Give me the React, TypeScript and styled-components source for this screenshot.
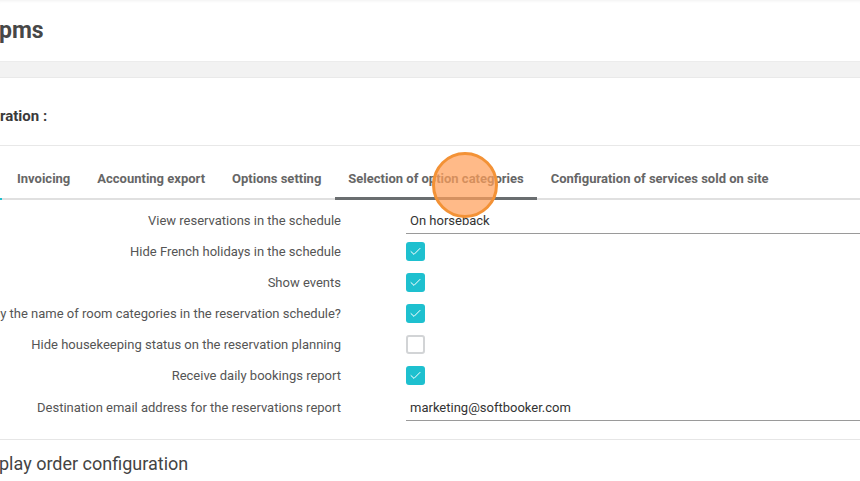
import React from "react";
import styled, { createGlobalStyle } from "styled-components";

const GlobalStyle = createGlobalStyle`
  html, body {
    margin: 0;
    padding: 0;
    background: #fff;
    overflow: hidden;
  }
  body {
    font-family: Roboto, "Liberation Sans", Arial, sans-serif;
    color: #555;
  }
`;

//components
const Page = styled.div`
  width: 860px;
  height: 481px;
  position: relative;
  overflow: hidden;
  background: #fff;
`;

const Header = styled.header`
  height: 61px;
  display: flex;
  align-items: center;
  box-shadow: inset 0 3px 3px -2px rgba(0, 0, 0, 0.06);
`;

const AppTitle = styled.h1`
  margin: 0 0 0 -1px;
  font-size: 23px;
  font-weight: 700;
  color: #474747;
`;

const Band = styled.div`
  height: 15px;
  background: #f2f2f2;
  border-top: 1px solid #ececec;
  border-bottom: 1px solid #e9e9e9;
`;

const Card = styled.section`
  background: #fff;
`;

const CardTitle = styled.h2`
  margin: 0;
  height: 59px;
  padding-top: 8px;
  display: flex;
  align-items: center;
  font-size: 15px;
  font-weight: 700;
  color: #3a3a3a;
  border-bottom: 1px solid #e8e8e8;
`;

const TabBar = styled.nav`
  display: flex;
  height: 52px;
  padding-left: 3.5px;
  border-bottom: 2px solid #e0e0e0;
  position: relative;
  &::before {
    content: "";
    position: absolute;
    left: 0;
    bottom: -2px;
    width: 2px;
    height: 2px;
    background: #1fc0cf;
  }
`;

const Tab = styled.a<{ $active?: boolean }>`
  display: flex;
  align-items: center;
  padding: 14px 13.5px 0;
  margin-bottom: -2px;
  font-size: 13px;
  font-weight: 700;
  color: #666;
  text-decoration: none;
  white-space: nowrap;
  border-bottom: 3px solid ${(p) => (p.$active ? "#6a6e70" : "transparent")};
`;

const Form = styled.div`
  padding: 4px 0 0;
  display: flex;
  flex-direction: column;
`;

const Row = styled.div<{ $h?: number }>`
  display: grid;
  grid-template-columns: 341px 1fr;
  column-gap: 65px;
  height: ${(p) => p.$h || 31}px;
  align-items: center;
`;

const Label = styled.label`
  display: flex;
  justify-content: flex-end;
  white-space: nowrap;
  font-size: 13px;
  color: #555;
`;

const TextValue = styled.div`
  height: 26px;
  display: flex;
  align-items: center;
  padding: 0 4px;
  margin-top: 1px;
  font-size: 13px;
  color: #333;
  border-bottom: 1px solid #9a9a9a;
`;

const Check = styled.span<{ $on?: boolean }>`
  width: 19px;
  height: 19px;
  box-sizing: border-box;
  border-radius: 3px;
  display: flex;
  align-items: center;
  justify-content: center;
  background: ${(p) => (p.$on ? "#1ec0cf" : "#fff")};
  border: ${(p) => (p.$on ? "none" : "2px solid #d2d4d6")};
`;

const SectionTitle = styled.h3`
  margin: 16px 0 0 -1px;
  padding-top: 13px;
  border-top: 1px solid #e6e6e6;
  font-size: 18px;
  font-weight: 400;
  color: #444;
`;

// click marker left by the screen recorder
const ClickDot = styled.div`
  position: absolute;
  left: 432px;
  top: 152px;
  width: 66px;
  height: 66px;
  box-sizing: border-box;
  border-radius: 50%;
  background: rgba(255, 160, 90, 0.72);
  border: 3px solid #f39236;
`;

const Tick = () => (
  <svg width="11" height="9" viewBox="0 0 11 9" fill="none">
    <path d="M1 4.6 L4 7.4 L10 1.4" stroke="#fff" strokeWidth="1" strokeLinecap="round" strokeLinejoin="round" />
  </svg>
);

const tabs = [
  { name: "Invoicing" },
  { name: "Accounting export" },
  { name: "Options setting" },
  { name: "Selection of option categories", active: true },
  { name: "Configuration of services sold on site" },
];

type Field =
  | { label: string; kind: "text"; value: string; h?: number }
  | { label: string; kind: "check"; on: boolean; h?: number };

const fields: Field[] = [
  { label: "View reservations in the schedule", kind: "text", value: "On horseback", h: 32 },
  { label: "Hide French holidays in the schedule", kind: "check", on: true },
  { label: "Show events", kind: "check", on: true },
  { label: "Display the name of room categories in the reservation schedule?", kind: "check", on: true },
  { label: "Hide housekeeping status on the reservation planning", kind: "check", on: false },
  { label: "Receive daily bookings report", kind: "check", on: true },
  { label: "Destination email address for the reservations report", kind: "text", value: "marketing@softbooker.com", h: 32 },
];

export default function App() {
  return (
    <Page>
      <GlobalStyle />
      <Header>
        <AppTitle>pms</AppTitle>
      </Header>
      <Band />
      <Card>
        <CardTitle>ration :</CardTitle>
        <TabBar>
          {tabs.map((t) => (
            <Tab key={t.name} href="#" $active={t.active}>
              {t.name}
            </Tab>
          ))}
        </TabBar>
        <Form>
          {fields.map((f) => (
            <Row key={f.label} $h={f.h}>
              <Label>{f.label}</Label>
              {f.kind === "text" ? (
                <TextValue>{f.value}</TextValue>
              ) : (
                <div>
                  <Check $on={f.on}>{f.on && <Tick />}</Check>
                </div>
              )}
            </Row>
          ))}
        </Form>
        <SectionTitle>play order configuration</SectionTitle>
      </Card>
      <ClickDot />
    </Page>
  );
}
